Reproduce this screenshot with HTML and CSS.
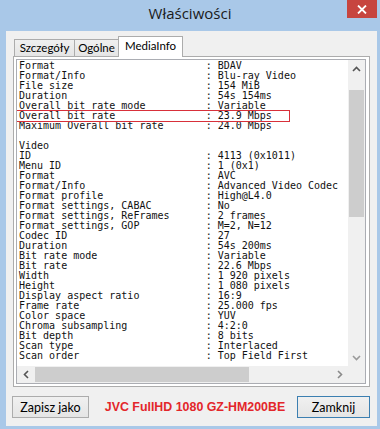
FILE: index.html
```html
<!DOCTYPE html>
<html lang="pl">
<head>
<meta charset="utf-8">
<title>Właściwości</title>
<link rel="stylesheet" href="styles.css">
</head>
<body>
<div class="window">
  <div class="titlebar">
    <span></span>
    <div class="title">Właściwości</div>
    <div class="close">
      <svg width="10" height="9" viewBox="0 0 10 9"><path d="M1 0.5 L9 8.5 M9 0.5 L1 8.5" stroke="#fff" stroke-width="1.8" fill="none"/></svg>
    </div>
  </div>
  <div class="client">
    <div class="tabs">
      <div class="tab t1">Szczegóły</div>
      <div class="tab t2">Ogólne</div>
      <div class="tab t3 active">MediaInfo</div>
    </div>
    <div class="page">
      <div class="textbox">
        <div class="content">
          <div class="row"><span>Format</span><span>: BDAV</span></div>
          <div class="row"><span>Format/Info</span><span>: Blu-ray Video</span></div>
          <div class="row"><span>File size</span><span>: 154 MiB</span></div>
          <div class="row"><span>Duration</span><span>: 54s 154ms</span></div>
          <div class="row"><span>Overall bit rate mode</span><span>: Variable</span></div>
          <div class="row marked"><span>Overall bit rate</span><span>: 23.9 Mbps</span></div>
          <div class="row"><span>Maximum Overall bit rate</span><span>: 24.0 Mbps</span></div>
          <div class="row"><span> </span><span></span></div>
          <div class="row"><span>Video</span><span></span></div>
          <div class="row"><span>ID</span><span>: 4113 (0x1011)</span></div>
          <div class="row"><span>Menu ID</span><span>: 1 (0x1)</span></div>
          <div class="row"><span>Format</span><span>: AVC</span></div>
          <div class="row"><span>Format/Info</span><span>: Advanced Video Codec</span></div>
          <div class="row"><span>Format profile</span><span>: High@L4.0</span></div>
          <div class="row"><span>Format settings, CABAC</span><span>: No</span></div>
          <div class="row"><span>Format settings, ReFrames</span><span>: 2 frames</span></div>
          <div class="row"><span>Format settings, GOP</span><span>: M=2, N=12</span></div>
          <div class="row"><span>Codec ID</span><span>: 27</span></div>
          <div class="row"><span>Duration</span><span>: 54s 200ms</span></div>
          <div class="row"><span>Bit rate mode</span><span>: Variable</span></div>
          <div class="row"><span>Bit rate</span><span>: 22.6 Mbps</span></div>
          <div class="row"><span>Width</span><span>: 1 920 pixels</span></div>
          <div class="row"><span>Height</span><span>: 1 080 pixels</span></div>
          <div class="row"><span>Display aspect ratio</span><span>: 16:9</span></div>
          <div class="row"><span>Frame rate</span><span>: 25.000 fps</span></div>
          <div class="row"><span>Color space</span><span>: YUV</span></div>
          <div class="row"><span>Chroma subsampling</span><span>: 4:2:0</span></div>
          <div class="row"><span>Bit depth</span><span>: 8 bits</span></div>
          <div class="row"><span>Scan type</span><span>: Interlaced</span></div>
          <div class="row"><span>Scan order</span><span>: Top Field First</span></div>
        </div>
        <div class="vscroll">
          <div class="arrow"><svg width="9" height="6" viewBox="0 0 9 6"><polyline points="1,5 4.5,1.5 8,5" fill="none" stroke="#555" stroke-width="1.6"/></svg></div>
          <div class="vtrack"><div class="vthumb"></div></div>
          <div class="arrow"><svg width="9" height="6" viewBox="0 0 9 6"><polyline points="1,1 4.5,4.5 8,1" fill="none" stroke="#9a9a9a" stroke-width="1.6"/></svg></div>
        </div>
        <div class="hscroll">
          <div class="arrow"><svg width="6" height="9" viewBox="0 0 6 9"><polyline points="5,1 1.5,4.5 5,8" fill="none" stroke="#555" stroke-width="1.6"/></svg></div>
          <div class="htrack"><div class="hthumb"></div></div>
          <div class="arrow"><svg width="6" height="9" viewBox="0 0 6 9"><polyline points="1,1 4.5,4.5 1,8" fill="none" stroke="#8a8a8a" stroke-width="1.6"/></svg></div>
        </div>
        <div class="corner"></div>
      </div>
    </div>
    <div class="footer">
      <button class="btn save">Zapisz jako</button>
      <div class="note">JVC FullHD 1080 GZ-HM200BE</div>
      <button class="btn close-btn">Zamknij</button>
    </div>
  </div>
</div>
</body>
</html>
```
FILE: styles.css
```css
* { box-sizing: border-box; }
html, body { margin: 0; padding: 0; }
body { width: 380px; height: 429px; overflow: hidden; background: #a9c8e8; }

.window {
  width: 380px;
  height: 429px;
  display: flex;
  flex-direction: column;
  background: #a9c8e8;
}

.titlebar {
  height: 31px;
  display: grid;
  grid-template-columns: 1fr auto 1fr;
  align-items: start;
}
.title {
  font-family: "Open Sans", "Noto Sans", sans-serif;
  font-size: 15px;
  line-height: 27px;
  color: #1a1a1a;
}
.close {
  justify-self: end;
  width: 30px;
  height: 18px;
  margin-right: 3px;
  background: #c7453f;
  display: flex;
  align-items: center;
  justify-content: center;
}

.client {
  flex: 1;
  margin: 0 3px 3px 6px;
  background: #f0f0f0;
  padding: 5px 7px 8px 6px;
  display: flex;
  flex-direction: column;
}

.tabs {
  height: 20px;
  display: flex;
  align-items: flex-end;
  margin-left: 2px;
  position: relative;
  z-index: 1;
}
.tab {
  height: 17px;
  border: 1px solid #acacac;
  border-bottom: none;
  background: linear-gradient(#f0f0f0, #e5e5e5);
  font-family: "Lato", "Open Sans", sans-serif;
  font-size: 11.5px;
  line-height: 15px;
  color: #000;
  text-align: center;
  margin-right: -1px;
  white-space: nowrap;
}
.t1 { width: 61px; }
.t2 { width: 45px; }
.t3 { width: 65px; }
.tab.active {
  height: 21px;
  margin-bottom: -1px;
  background: #fff;
  line-height: 17px;
}

.page {
  height: 331px;
  margin-left: 1px;
  border: 1px solid #acacac;
  background: #fff;
  padding: 2px 3px 2px 2px;
}

.textbox {
  height: 100%;
  border: 1px solid #abadb3;
  background: #fff;
  display: grid;
  grid-template-columns: 1fr 17px;
  grid-template-rows: 1fr 17px;
  overflow: hidden;
}

.content {
  overflow: hidden;
  padding-top: 1px;
  font-family: "DejaVu Sans Mono", "Liberation Mono", monospace;
  font-size: 10px;
  line-height: 10px;
  color: #111;
}
.row {
  display: grid;
  grid-template-columns: 31ch 1fr;
  white-space: pre;
  padding-left: 2px;
  height: 10px;
}
.row.marked {
  width: 272px;
  outline: 1px solid #d8303a;
}

.vscroll {
  background: #f0f0f0;
  display: flex;
  flex-direction: column;
}
.arrow {
  width: 17px;
  height: 17px;
  display: flex;
  align-items: center;
  justify-content: center;
  flex: none;
}
.vtrack { flex: 1; }
.vthumb {
  margin: 13px 1px 0;
  height: 127px;
  background: #cdcdcd;
}

.hscroll {
  background: #f0f0f0;
  display: flex;
}
.htrack { flex: 1; display: flex; align-items: stretch; }
.hthumb {
  margin: 1px 0 1px 1px;
  width: 214px;
  background: #cdcdcd;
}
.corner { background: #f0f0f0; }

.footer {
  margin-top: 9px;
  height: 22px;
  display: flex;
  align-items: center;
}
.btn {
  height: 22px;
  border: 1px solid #acacac;
  background: linear-gradient(#f0f0f0, #e5e5e5);
  font-family: "Lato", "Open Sans", sans-serif;
  font-size: 12.5px;
  color: #000;
  padding: 0;
  margin: 0;
}
.btn.save { width: 77px; }
.btn.close-btn { width: 73px; border-color: #3c7fb1; }
.note {
  flex: 1;
  text-align: center;
  padding-left: 4px;
  font-family: "Liberation Sans", Arial, sans-serif;
  font-weight: bold;
  font-size: 12.4px;
  color: #e3262a;
}
```
